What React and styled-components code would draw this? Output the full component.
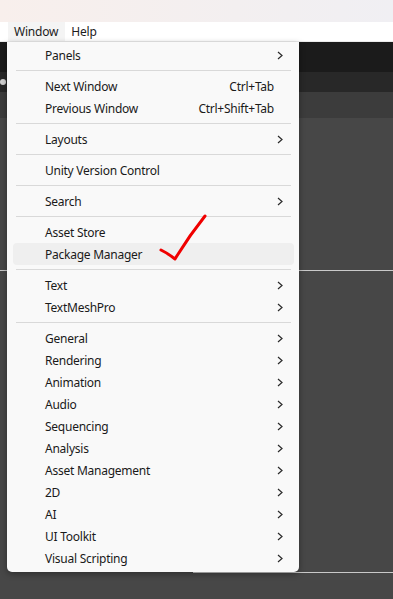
import React from "react";
import styled, { createGlobalStyle } from "styled-components";

const GlobalStyle = createGlobalStyle`
  html, body, #root {
    margin: 0;
    height: 100%;
  }
  body {
    overflow: hidden;
    font-family: "Noto Sans", "Segoe UI", sans-serif;
    -webkit-font-smoothing: antialiased;
  }
`;

const Page = styled.div`
  position: relative;
  display: flex;
  flex-direction: column;
  width: 393px;
  height: 599px;
  background: #474747;
`;

const TitleBand = styled.div`
  height: 22px;
  background: linear-gradient(90deg, #f8efec 0%, #f3eff0 60%, #f0eff3 100%);
`;

const MenuBar = styled.div`
  display: flex;
  align-items: stretch;
  height: 19px;
  padding-left: 8px;
  background: #ffffff;
  border-bottom: 1px solid #ebebeb;
`;

const BarItem = styled.div`
  display: flex;
  align-items: center;
  padding: 0 ${({ $pad }) => $pad}px 0 6px;
  font-size: 12px;
  letter-spacing: -0.2px;
  color: #1c1c1c;
  background: ${({ $open }) => ($open ? "#f4f4f4" : "transparent")};
`;

const Editor = styled.div`
  position: relative;
  flex: 1;
  display: flex;
  flex-direction: column;
`;

const Band = styled.div`
  height: ${({ $h }) => $h}px;
  background: ${({ $bg }) => $bg};
  display: flex;
  align-items: center;
`;

const Dot = styled.div`
  width: 6px;
  height: 6px;
  margin-left: 0;
  border-radius: 50%;
  background: #d0d0d0;
`;

const UpperPanel = styled.div`
  height: 152px;
  border-bottom: 1px solid #c9c9c9;
`;

const LowerRow = styled.div`
  display: flex;
  height: 302px;
`;

const LowerLeft = styled.div`
  width: 193px;
`;

const LowerRight = styled.div`
  flex: 1;
  border-bottom: 1px solid #c9c9c9;
  border-left: 1px solid #c9c9c9;
`;

const Dropdown = styled.div`
  position: absolute;
  left: 7px;
  top: 0;
  width: 292px;
  padding: 2px 0 3px;
  background: #f9f9f9;
  border-radius: 0 0 5px 5px;
  box-shadow: 0 2px 6px rgba(0, 0, 0, 0.35);
  display: flex;
  flex-direction: column;
`;

const Item = styled.div`
  position: relative;
  display: flex;
  align-items: center;
  height: 22px;
  margin: 0 5px 0 6px;
  padding: 0 11px 0 32px;
  border-radius: 4px;
  font-size: 12px;
  letter-spacing: -0.25px;
  color: #1a1a1a;
  background: ${({ $hover }) => ($hover ? "#efefef" : "transparent")};
`;

const Label = styled.span`
  flex: 1;
`;

const Shortcut = styled.span`
  color: #1a1a1a;
  margin-right: 9px;
`;

const Separator = styled.div`
  height: 1px;
  margin: 4px 8px 4px 9px;
  background: #d9d9d9;
`;

const Tick = styled.svg`
  position: absolute;
  left: 144px;
  top: -35px;
  pointer-events: none;
`;

const Chevron = () => (
  <svg width="6" height="9" viewBox="0 0 6 9">
    <path d="M1 1 L5 4.5 L1 8" fill="none" stroke="#2a2a2a" strokeWidth="1.2" />
  </svg>
);

const groups = [
  [{ label: "Panels", sub: true }],
  [
    { label: "Next Window", key: "Ctrl+Tab" },
    { label: "Previous Window", key: "Ctrl+Shift+Tab" },
  ],
  [{ label: "Layouts", sub: true }],
  [{ label: "Unity Version Control" }],
  [{ label: "Search", sub: true }],
  [{ label: "Asset Store" }, { label: "Package Manager", hover: true, tick: true }],
  [
    { label: "Text", sub: true },
    { label: "TextMeshPro", sub: true },
  ],
  [
    "General",
    "Rendering",
    "Animation",
    "Audio",
    "Sequencing",
    "Analysis",
    "Asset Management",
    "2D",
    "AI",
    "UI Toolkit",
    "Visual Scripting",
  ].map((label) => ({ label, sub: true })),
];

export default function App() {
  return (
    <>
      <GlobalStyle />
      <Page>
        <TitleBand />
        <MenuBar>
          <BarItem $open $pad={7}>Window</BarItem>
          <BarItem $pad={6}>Help</BarItem>
        </MenuBar>
        <Editor>
          <Band $h={30} $bg="#1b1b1b" />
          <Band $h={20} $bg="#282828">
            <Dot />
          </Band>
          <Band $h={26} $bg="#3c3c3c" />
          <UpperPanel />
          <LowerRow>
            <LowerLeft />
            <LowerRight />
          </LowerRow>

          <Dropdown>
            {groups.map((group, gi) => (
              <React.Fragment key={gi}>
                {gi > 0 && <Separator />}
                {group.map((it) => (
                  <Item key={it.label} $hover={it.hover}>
                    <Label>{it.label}</Label>
                    {it.key && <Shortcut>{it.key}</Shortcut>}
                    {it.sub && <Chevron />}
                    {it.tick && (
                      <Tick width="56" height="60" viewBox="0 0 56 60">
                        <path
                          d="M4 42 Q12 46 18 51 Q32 28 48 8"
                          fill="none"
                          stroke="#f00000"
                          strokeWidth="3"
                          strokeLinecap="round"
                          strokeLinejoin="round"
                        />
                      </Tick>
                    )}
                  </Item>
                ))}
              </React.Fragment>
            ))}
          </Dropdown>
        </Editor>
      </Page>
    </>
  );
}
